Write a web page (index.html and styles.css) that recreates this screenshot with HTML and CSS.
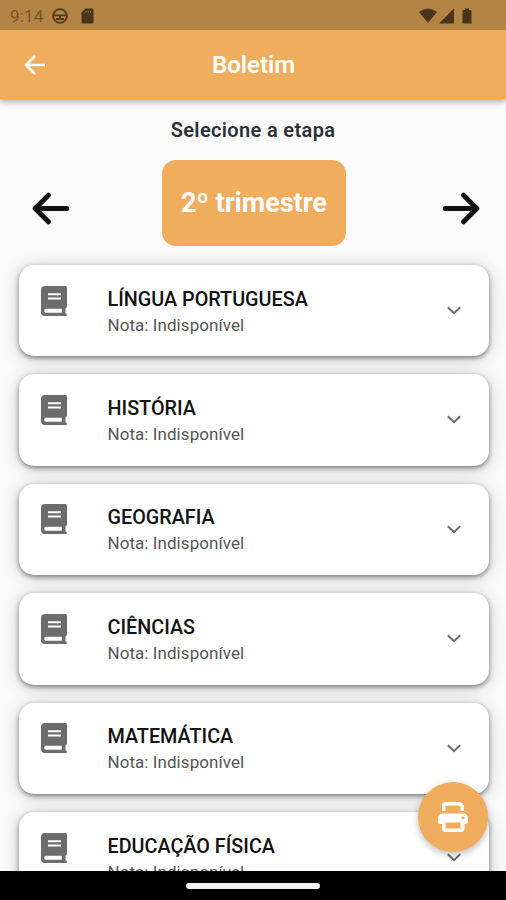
FILE: index.html
```html
<!DOCTYPE html>
<html lang="pt-BR">
<head>
<meta charset="utf-8">
<title>Boletim</title>
<link rel="stylesheet" href="styles.css">
</head>
<body>
<svg class="symbols" aria-hidden="true">
  <symbol id="book" viewBox="0 0 26 30"><path fill-rule="evenodd" d="M4 0H24.500Q26 0 26 1.500V20.500Q26 22 24.500 22.500V27.500Q26 27.800 26 28.700Q26 30 24.800 30H4Q0 30 0 26V4Q0 0 4 0zM4.500 22.800Q3.300 22.800 3.300 24.800Q3.300 26.800 4.500 26.800H20.800V22.800zM7 7.300V9.300H20V7.300zM7 11.600V13.600H20V11.600z"/></symbol>
  <symbol id="chevron" viewBox="0 0 24 24"><path d="M5.800 9.300 12 15.200l6.200-5.900" fill="none" stroke="#6b6b6b" stroke-width="2"/></symbol>
</svg>
<div class="screen">
  <div class="status">
    <span class="time">9:14</span>
    <svg class="wheel" viewBox="0 0 16 16"><circle cx="8" cy="8" r="6.9"/><path d="M1.5 7.400H14.500M8 7.400V11M4 11H12"/></svg>
    <svg class="sd" viewBox="0 0 13 16"><path fill-rule="evenodd" d="M4.5.5H11.5Q12.5.5 12.5 1.5V14.5Q12.5 15.5 11.5 15.5H1.5Q.5 15.5.5 14.5V4.5zM4.500 3v1.500h1V3zm2.300 0v1.500h1V3zm2.300 0v1.500h1V3z"/></svg>
    <svg class="signals" viewBox="0 0 54 16"><path d="M0 4Q9-3 18 4L9 15zM20 15.5 35 .5v15zM46 .5h4V2h1.5q1 0 1 1v12.500h-9V3q0-1 1-1H46z"/></svg>
  </div>
  <header class="appbar">
    <svg class="back" viewBox="0 0 20 20"><path d="M10 1 1 10l9 9M1 10h19"/></svg>
    <h1>Boletim</h1>
  </header>
  <main>
    <h2>Selecione a etapa</h2>
    <div class="picker">
      <svg class="arrow" viewBox="0 0 36 32"><path d="M16 3 3 16l13 13M3 16h31"/></svg>
      <div class="stage"><span>2º trimestre</span></div>
      <svg class="arrow next" viewBox="0 0 36 32"><path d="M16 3 3 16l13 13M3 16h31"/></svg>
    </div>
    <div class="list">
      <article class="card"><svg class="book"><use href="#book"/></svg><div class="info"><h3>LÍNGUA PORTUGUESA</h3><p>Nota: Indisponível</p></div><svg class="chevron"><use href="#chevron"/></svg></article>
      <article class="card"><svg class="book"><use href="#book"/></svg><div class="info"><h3>HISTÓRIA</h3><p>Nota: Indisponível</p></div><svg class="chevron"><use href="#chevron"/></svg></article>
      <article class="card"><svg class="book"><use href="#book"/></svg><div class="info"><h3>GEOGRAFIA</h3><p>Nota: Indisponível</p></div><svg class="chevron"><use href="#chevron"/></svg></article>
      <article class="card"><svg class="book"><use href="#book"/></svg><div class="info"><h3>CIÊNCIAS</h3><p>Nota: Indisponível</p></div><svg class="chevron"><use href="#chevron"/></svg></article>
      <article class="card"><svg class="book"><use href="#book"/></svg><div class="info"><h3>MATEMÁTICA</h3><p>Nota: Indisponível</p></div><svg class="chevron"><use href="#chevron"/></svg></article>
      <article class="card"><svg class="book"><use href="#book"/></svg><div class="info"><h3>EDUCAÇÃO FÍSICA</h3><p>Nota: Indisponível</p></div><svg class="chevron"><use href="#chevron"/></svg></article>
    </div>
  </main>
  <button class="fab" aria-label="Imprimir"><svg viewBox="0 0 30 30"><path fill-rule="evenodd" d="M4 9V4Q4 0 8 0H21Q23 0 24 1L26 4V9H22.500V5L21 3.500H7.500V9zM5 11.500H25Q30 11.500 30 16.500V20Q30 22 28 22H26.500V26Q26.500 30 23 30H7.500Q4 30 4 26V22H2Q0 22 0 20V16.500Q0 11.500 5 11.500zM7.500 20.500V26.500H22.500V20.500zM25 14.500a1.500 1.500 0 1 0 .01 0z"/></svg></button>
  <nav class="navbar"><div class="handle"></div></nav>
</div>
</body>
</html>
```
FILE: styles.css
```css
* { box-sizing: border-box; }
body { margin: 0; font-family: Roboto, "Liberation Sans", sans-serif; }
h1, h2, h3, p { margin: 0; }
svg { display: block; flex: none; }
.symbols { position: absolute; width: 0; height: 0; }
.screen { position: relative; width: 506px; height: 900px; display: flex; flex-direction: column; overflow: hidden; background: #fafafa; }
.status { flex: none; height: 30px; display: flex; align-items: center; padding: 1px 33px 0 10px; background: #b48445; color: #76552b; z-index: 2; }
.time { width: 42px; font-size: 17px; line-height: 20px; letter-spacing: .2px; }
.wheel { width: 16px; height: 16px; fill: none; stroke: #4f391e; stroke-width: 1.8; }
.sd { width: 13px; height: 16px; margin-left: 13px; fill: #4a351c; }
.signals { width: 54px; height: 16px; margin-left: auto; fill: #4a351c; }
.appbar { flex: none; height: 69px; display: grid; grid-template-columns: 60px 1fr 60px; align-items: center; background: #f0ad5d; color: #fff; box-shadow: 0 2px 7px rgba(0,0,0,.38); z-index: 1; }
.back { width: 20px; height: 20px; margin-left: 25px; fill: none; stroke: #fff; stroke-width: 2.5; overflow: visible; }
h1 { text-align: center; font-size: 24px; line-height: 28px; font-weight: 600; padding-top: 1px; padding-left: 1px; }
main { flex: 1; min-height: 0; overflow: hidden; padding-top: 20px; }
h2 { text-align: center; font-size: 20px; line-height: 22px; font-weight: 600; letter-spacing: .35px; color: #2c3139; }
.picker { height: 86px; margin: 19px 26px 0 32px; display: flex; justify-content: space-between; align-items: center; }
.arrow { width: 37px; height: 33px; margin-top: 10px; fill: none; stroke: #111; stroke-width: 4.8; stroke-linecap: round; stroke-linejoin: round; }
.stage { width: 184px; height: 86px; margin-right: 4px; display: flex; align-items: center; justify-content: center; border-radius: 14px; background: #f0ad5d; color: #fff; font-size: 27px; font-weight: 700; white-space: nowrap; }
.next { transform: scaleX(-1); }
.list { display: grid; gap: 18.2px; padding: 19px 17.500px 0 18.500px; }
.card { height: 91.3px; display: flex; align-items: flex-start; padding: 20.500px 23px 0 22px; background: #fff; border-radius: 15px; box-shadow: 0 2px 5px rgba(0,0,0,.45), 0 2px 18px rgba(0,0,0,.18); }
.book { width: 26px; height: 30px; fill: #6c6c6c; }
.info { flex: 1; margin-left: 41px; padding-top: 2px; white-space: nowrap; }
h3 { font-size: 19.8px; line-height: 23px; font-weight: 500; color: #111; }
.info p { font-size: 17px; line-height: 22px; margin-top: 3px; letter-spacing: .06px; color: #555; }
.chevron { width: 24px; height: 24px; margin-top: 12.500px; }
.fab { position: absolute; left: 418px; top: 782px; width: 70px; height: 70px; border: 0; padding: 0; border-radius: 50%; background: #f0ad5d; display: grid; place-items: center; box-shadow: 0 3px 7px rgba(0,0,0,.25); }
.fab svg { width: 30px; height: 30px; fill: #fff; }
.navbar { flex: none; height: 29px; display: flex; align-items: center; justify-content: center; background: #000; z-index: 1; }
.handle { width: 134px; height: 6px; border-radius: 3px; background: #f5f5f5; }
```
